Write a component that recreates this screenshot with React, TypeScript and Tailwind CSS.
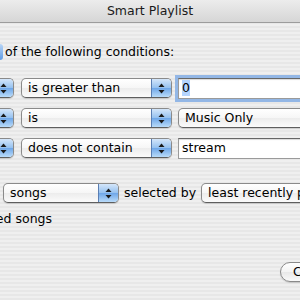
import React from 'react';

const font = { fontFamily: '"DejaVu Sans", "Liberation Sans", sans-serif' };

// Aqua up/down arrows inside the blue stepper
const Arrows: React.FC = () => (
  <svg width="7" height="11" viewBox="0 0 7 11">
    <path d="M3.5 0.5 L6.5 4 L0.5 4 Z" fill="#1a1a1a" />
    <path d="M3.5 10.5 L6.5 7 L0.5 7 Z" fill="#1a1a1a" />
  </svg>
);

interface PopupProps {
  label?: string;
  className?: string;
  stepper?: boolean;
}

const Popup: React.FC<PopupProps> = ({ label = '', className = '', stepper = true }) => (
  <div
    className={`flex h-[20px] shrink-0 overflow-hidden rounded-[5px] border border-[#8a8a8a] border-b-[#5e5e5e] bg-[linear-gradient(#ffffff,#f6f6f6_50%,#ececec_51%,#fbfbfb)] shadow-[0_1px_1px_rgba(0,0,0,0.15)] ${className}`}
  >
    <span className="flex-1 overflow-hidden whitespace-nowrap pl-[6px] text-[12.5px] leading-[18px] text-black">{label}</span>
    {stepper && (
      <div className="flex w-[20px] shrink-0 items-center justify-center border-l border-[#5a7eb3] bg-[linear-gradient(#d4e6fa,#94c0ef_50%,#6ea6e8_51%,#b9dbf9)]">
        <Arrows />
      </div>
    )}
  </div>
);

interface FieldProps {
  value: string;
  focused?: boolean;
  className?: string;
}

const Field: React.FC<FieldProps> = ({ value, focused, className = '' }) => (
  <div
    className={`flex h-[21px] shrink-0 items-center border border-[#9a9a9a] border-t-[#666666] bg-white pl-[3px] shadow-[inset_0_1px_1px_rgba(0,0,0,0.15)] ${
      focused ? 'ring-[3px] ring-[#93b7e6]' : ''
    } ${className}`}
  >
    <span className={`text-[12.5px] leading-[16px] text-black ${focused ? 'bg-[#b5d5ff]' : ''}`}>{value}</span>
  </div>
);

const rows = [
  { op: 'is greater than', value: <Field value="0" focused className="w-[140px]" /> },
  { op: 'is', value: <Popup label="Music Only" stepper={false} className="w-[140px]" /> },
  { op: 'does not contain', value: <Field value="stream" className="w-[140px]" /> },
];

export default function App() {
  return (
    <div
      style={font}
      className="h-[300px] w-[300px] overflow-hidden bg-[repeating-linear-gradient(to_bottom,#efefef_0px,#efefef_2px,#e7e7e7_2px,#e7e7e7_4px)] text-[12.5px] text-black"
    >
      {/* title bar */}
      <div className="flex h-[23px] items-center justify-center border-b border-[#9c9c9c] bg-[linear-gradient(#ececec,#d6d6d6)] text-[12.5px] text-[#1a1a1a]">
        Smart Playlist
      </div>

      {/* match line */}
      <div className="mt-[21px] flex h-[16px] items-center">
        <div className="h-[16px] w-[3px] rounded-r-[3px] bg-[linear-gradient(#b9d6f7,#5f9be3)]" />
        <span className="ml-[2px] whitespace-nowrap">of the following conditions:</span>
      </div>

      {/* condition rows */}
      <div className="mt-[18px] flex flex-col gap-[10px]">
        {rows.map((r) => (
          <div key={r.op} className="flex h-[20px] items-center">
            <Popup className="-ml-[106px] w-[120px]" />
            <Popup label={r.op} className="ml-[7px] w-[151px]" />
            <div className="ml-[6px]">{r.value}</div>
          </div>
        ))}
      </div>

      {/* limit line */}
      <div className="mt-[25px] flex h-[20px] items-center">
        <Popup label="songs" className="ml-[3px] w-[116px]" />
        <span className="ml-[5px] whitespace-nowrap">selected by</span>
        <Popup label="least recently played" className="ml-[5px] w-[170px]" />
      </div>

      {/* checked songs */}
      <div className="mt-[8px] -ml-[148px] h-[16px] w-[200px] whitespace-nowrap text-right leading-[16px]">
        Match only checked songs
      </div>

      {/* buttons */}
      <div className="mt-[35px] flex">
        <div className="ml-[280px] flex h-[20px] w-[80px] shrink-0 items-center rounded-[10px] border border-[#8a8a8a] bg-[linear-gradient(#ffffff,#f3f3f3_50%,#e8e8e8_51%,#fafafa)] pl-[12px] shadow-[0_1px_1px_rgba(0,0,0,0.15)]">
          Cancel
        </div>
      </div>
    </div>
  );
}
